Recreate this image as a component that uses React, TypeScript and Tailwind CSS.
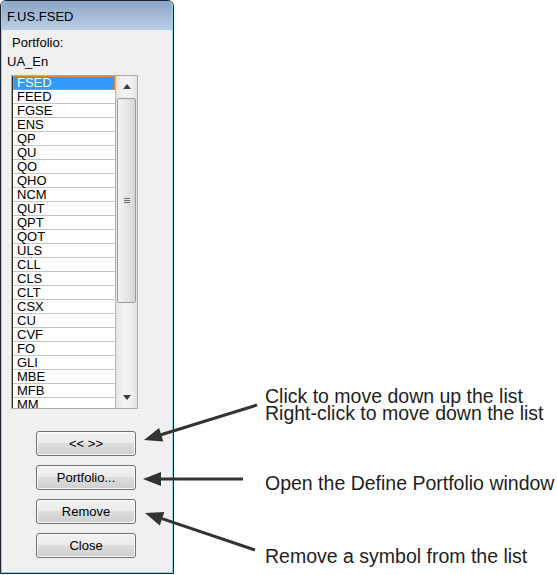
import React from "react";

const items = [
  "FSED","FEED","FGSE","ENS","QP","QU","QO","QHO","NCM","QUT","QPT","QOT","ULS","CLL","CLS","CLT","CSX","CU","CVF","FO","GLI","MBE","MFB","MM",
];

function Btn({ label }: { label: string }) {
  return (
    <div className="w-[100px] h-[25px] border border-[#707070] rounded-[3px] bg-[linear-gradient(#f2f2f2,#ebebeb_50%,#dddddd_50%,#cfcfcf)] shadow-[inset_0_0_0_1px_#fbfbfb] flex items-center justify-center text-[13px] text-black leading-none">
      {label}
    </div>
  );
}

export default function App() {
  return (
    <div className="relative w-[557px] h-[575px] bg-white overflow-hidden flex font-['Liberation_Sans',Arial,sans-serif]">
      {/* Window */}
      <div className="w-[174px] h-[574px] border border-[#1d2733] rounded-t-[6px] overflow-hidden flex flex-col shrink-0">
        <div className="flex-1 flex flex-col border-x border-b border-[#86d2f2] rounded-t-[5px] overflow-hidden">
          <div className="h-[29px] shrink-0 bg-gradient-to-b from-[#8ba5c5] to-[#bad0e8] flex items-center pl-[5px] pt-[3px] text-[13px] text-black">
            F.US.FSED
          </div>
          <div className="flex-1 bg-[#f0f0f0] flex flex-col pt-[5px]">
            <div className="pl-[10px] text-[13px] leading-[16px] text-black">Portfolio:</div>
            <div className="pl-[5px] mt-[3px] text-[13px] leading-[16px] text-black">UA_En</div>
            {/* List box */}
            <div className="ml-[9px] mt-[5px] w-[127px] h-[334px] border border-[#a9a9a9] bg-white flex overflow-hidden">
              <div className="w-[104px] h-full border-l border-l-[#2e2e2e] border-r border-r-[#b4b4b4] overflow-hidden">
                {items.map((it, i) =>
                  i === 0 ? (
                    <div key={it} className="h-[14px] leading-[12px] text-[13px] pl-[3px] bg-[#3399ff] text-white border border-[#e5862b]">
                      {it}
                    </div>
                  ) : (
                    <div key={it} className="h-[14px] leading-[14px] text-[13px] pl-[4px] text-black border-b border-[#c4c4c4]">
                      {it}
                    </div>
                  )
                )}
              </div>
              {/* Scrollbar */}
              <div className="flex-1 h-full bg-[linear-gradient(90deg,#e3e3e3,#f1f1f1_30%,#f1f1f1_70%,#e3e3e3)] flex flex-col items-center">
                <div className="h-[21px] w-full flex items-center justify-center">
                  <svg width="8" height="5" viewBox="0 0 8 5">
                    <polygon points="0,5 8,5 4,0" fill="#3c3c3c" />
                  </svg>
                </div>
                <div className="mt-[1px] w-[19px] h-[205px] border border-[#9a9a9a] rounded-[2px] bg-[linear-gradient(90deg,#f3f3f3,#e6e6e6_50%,#d6d6d6)] flex flex-col items-center justify-center gap-[1px]">
                  <div className="w-[6px] h-[1px] bg-[#6b6b6b]" />
                  <div className="w-[6px] h-[1px] bg-[#6b6b6b]" />
                  <div className="w-[6px] h-[1px] bg-[#6b6b6b]" />
                </div>
                <div className="flex-1" />
                <div className="h-[21px] w-full flex items-center justify-center">
                  <svg width="8" height="5" viewBox="0 0 8 5">
                    <polygon points="0,0 8,0 4,5" fill="#3c3c3c" />
                  </svg>
                </div>
              </div>
            </div>
            {/* Buttons */}
            <div className="ml-[34px] mt-[22px] flex flex-col gap-[9px]">
              <Btn label="<< >>" />
              <Btn label="Portfolio..." />
              <Btn label="Remove" />
              <Btn label="Close" />
            </div>
          </div>
        </div>
      </div>

      {/* Annotations */}
      <div className="ml-[91px] flex flex-col text-[19.5px] leading-[17px] text-[#1e1e1e] whitespace-nowrap">
        <div className="mt-[388px]">
          <div>Click to move down up the list</div>
          <div>Right-click to move down the list</div>
        </div>
        <div className="mt-[53px]">Open the Define Portfolio window</div>
        <div className="mt-[56px]">Remove a symbol from the list</div>
      </div>

      {/* Arrows overlay */}
      <svg className="absolute left-0 top-0 pointer-events-none" width="557" height="575">
        <g stroke="#333" strokeWidth="3" fill="#333">
          <line x1="257" y1="405" x2="161" y2="434.7" />
          <polygon points="144,440 159.1,428 163.3,441.4" stroke="none" />
          <line x1="243" y1="479" x2="160" y2="479" />
          <polygon points="143,479 161,472 161,486" stroke="none" />
          <line x1="255" y1="550" x2="162" y2="518.7" />
          <polygon points="145,513 164.3,512.1 159.8,525.4" stroke="none" />
        </g>
      </svg>
    </div>
  );
}
